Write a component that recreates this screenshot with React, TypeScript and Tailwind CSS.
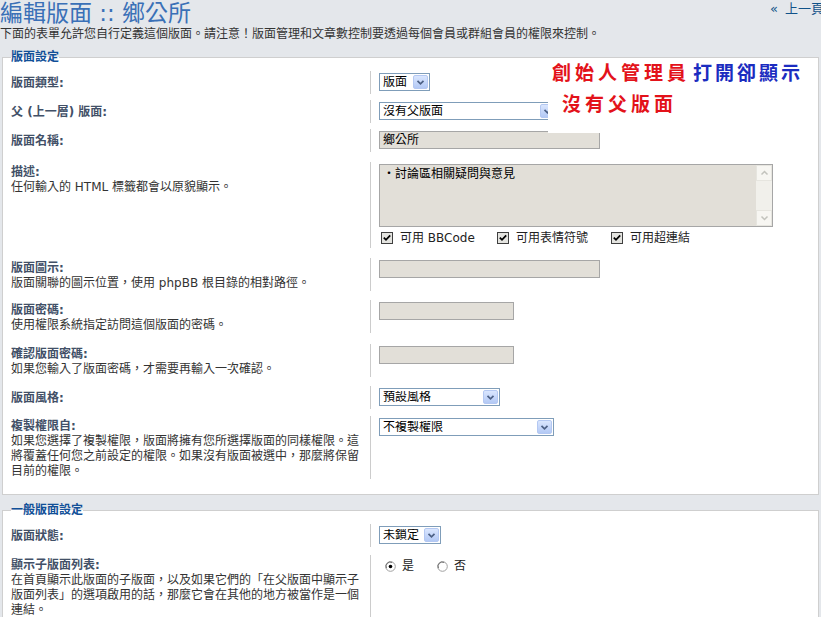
import React from "react";

/* --- small form controls (XP-era look) ------------------------------ */
function Arrow() {
  return (
    <span className="mr-px flex h-[14px] w-[15px] shrink-0 items-center justify-center rounded-[2px] border border-[#b4c8f2] bg-linear-to-b from-[#dae6fe] to-[#b3c9f5]">
      <svg width="9" height="7" viewBox="0 0 9 7">
        <path d="M1.5 1.8 L4.5 4.8 L7.5 1.8" fill="none" stroke="#4d6185" strokeWidth="1.7" />
      </svg>
    </span>
  );
}

function Select({ value, w }: { value: string; w: string }) {
  return (
    <div className={`${w} flex h-[18px] items-center border border-[#7f9db9] bg-white`}>
      <span className="flex-1 overflow-hidden whitespace-nowrap pl-[3px] text-[12px] leading-none text-black">{value}</span>
      <Arrow />
    </div>
  );
}

function Input({ value = "", w }: { value?: string; w: string }) {
  return (
    <div className={`${w} flex h-[18px] items-center border border-[#a6a6a6] bg-[#e2dfd8] pl-[3px] text-[12px] leading-none text-black`}>
      {value}
    </div>
  );
}

function Check({ label }: { label: string }) {
  return (
    <div className="flex items-center">
      <svg width="12" height="12" viewBox="0 0 12 12" className="shrink-0">
        <rect x="0.5" y="0.5" width="11" height="11" fill="#e4e4e0" stroke="#3f3f3f" />
        <path d="M2.8 5.6 L5 7.8 L9.2 3.4" fill="none" stroke="#000" strokeWidth="1.8" />
      </svg>
      <span className="ml-[7px] text-[12px] leading-[14px] text-[#222]">{label}</span>
    </div>
  );
}

function Radio({ label, on }: { label: string; on?: boolean }) {
  return (
    <div className="flex items-center">
      <svg width="11" height="11" viewBox="0 0 11 11" className="shrink-0">
        <circle cx="5.5" cy="5.5" r="4.8" fill="#fff" stroke="#a0a0a0" />
        <path d="M1.4 7.2 A4.4 4.4 0 0 1 7.2 1.4" fill="none" stroke="#6b6b6b" strokeWidth="1" />
        {on && <circle cx="5.5" cy="5.5" r="1.8" fill="#000" />}
      </svg>
      <span className="ml-[6px] text-[12px] leading-[14px] text-[#222]">{label}</span>
    </div>
  );
}

/* --- a dl-style form row -------------------------------------------- */
function Row({
  className = "",
  label,
  desc,
  children,
}: {
  className?: string;
  label: string;
  desc?: React.ReactNode;
  children: React.ReactNode;
}) {
  return (
    <div className={`flex ${className}`}>
      <div className="w-[359px] shrink-0 pt-[3px]">
        <div className={`text-[12px] font-bold text-[#425067] ${desc ? "leading-[15px]" : "leading-[18px]"}`}>{label}</div>
        {desc && <div className="text-[12px] leading-[15px] text-[#333]">{desc}</div>}
      </div>
      <div className="flex-1 border-l border-[#cccccc] pb-[3px] pl-[8px] pt-[2px]">{children}</div>
    </div>
  );
}

function Legend({ children }: { children: React.ReactNode }) {
  return <legend className="text-[12px] font-bold leading-[14px] text-[#115098]">{children}</legend>;
}

export default function App() {
  return (
    <div className="relative min-h-screen overflow-hidden bg-[#e4e7eb] pb-10 font-['DejaVu_Sans','Noto_Sans_CJK_TC',sans-serif]">
      {/* header */}
      <div className="flex h-[25px] items-start justify-between pt-[2px]">
        <h1 className="text-[23px] font-normal leading-[23px] text-[#3a70b7]">編輯版面 :: 鄉公所</h1>
        <a className="-mr-[3px] text-[13px] leading-[14px] text-[#105289]">
          «<span className="ml-[7px]">上一頁</span>
        </a>
      </div>
      <p className="mt-[2px] text-[12px] leading-[15px] text-[#333]">
        下面的表單允許您自行定義這個版面。請注意！版面管理和文章數控制要透過每個會員或群組會員的權限來控制。
      </p>

      {/* 版面設定 */}
      <fieldset className="mx-[2px] mt-[8px] border border-[#cfcfcf] bg-white pb-[15px] pl-[8px] pt-[7px]">
        <Legend>版面設定</Legend>

        <Row label="版面類型:">
          <Select value="版面" w="w-[51px]" />
        </Row>
        <Row className="mt-[6px]" label="父 (上一層) 版面:">
          <Select value="沒有父版面" w="w-[178px]" />
        </Row>
        <Row className="mt-[6px]" label="版面名稱:">
          <Input value="鄉公所" w="w-[221px]" />
        </Row>
        <Row className="mt-[10px]" label="描述:" desc="任何輸入的 HTML 標籤都會以原貌顯示。">
          <div className="flex h-[63px] w-[394px] border border-[#a6a6a6] bg-[#e2dfd8]">
            <div className="flex-1 pl-[3px] pt-[2px] text-[12px] leading-[15px] text-black">・討論區相關疑問與意見</div>
            <div className="flex w-[16px] flex-col bg-[#f1f0eb]">
              <div className="flex h-[16px] items-center justify-center border border-[#e6e5df] bg-[#f7f6f2]">
                <svg width="9" height="6" viewBox="0 0 9 6">
                  <path d="M1.5 4.5 L4.5 1.5 L7.5 4.5" fill="none" stroke="#c3c3bd" strokeWidth="1.5" />
                </svg>
              </div>
              <div className="flex-1" />
              <div className="flex h-[16px] items-center justify-center border border-[#e6e5df] bg-[#f7f6f2]">
                <svg width="9" height="6" viewBox="0 0 9 6">
                  <path d="M1.5 1.5 L4.5 4.5 L7.5 1.5" fill="none" stroke="#c3c3bd" strokeWidth="1.5" />
                </svg>
              </div>
            </div>
          </div>
          <div className="ml-[2px] mt-[4px] flex">
            <div className="w-[116px]">
              <Check label="可用 BBCode" />
            </div>
            <div className="w-[114px]">
              <Check label="可用表情符號" />
            </div>
            <Check label="可用超連結" />
          </div>
        </Row>
        <Row className="mt-[10px]" label="版面圖示:" desc="版面關聯的圖示位置，使用 phpBB 根目錄的相對路徑。">
          <Input w="w-[221px]" />
        </Row>
        <Row className="mt-[9px]" label="版面密碼:" desc="使用權限系統指定訪問這個版面的密碼。">
          <Input w="w-[135px]" />
        </Row>
        <Row className="mt-[11px]" label="確認版面密碼:" desc="如果您輸入了版面密碼，才需要再輸入一次確認。">
          <Input w="w-[135px]" />
        </Row>
        <Row className="mt-[9px]" label="版面風格:">
          <Select value="預設風格" w="w-[121px]" />
        </Row>
        <Row
          className="mt-[7px]"
          label="複製權限自:"
          desc={
            <>
              如果您選擇了複製權限，版面將擁有您所選擇版面的同樣權限。這
              <br />
              將覆蓋任何您之前設定的權限。如果沒有版面被選中，那麼將保留
              <br />
              目前的權限。
            </>
          }
        >
          <Select value="不複製權限" w="w-[175px]" />
        </Row>
      </fieldset>

      {/* 一般版面設定 */}
      <fieldset className="mx-[2px] mt-[8px] border border-[#cfcfcf] bg-white pb-[15px] pl-[8px] pt-[7px]">
        <Legend>一般版面設定</Legend>

        <Row label="版面狀態:">
          <Select value="未鎖定" w="w-[62px]" />
        </Row>
        <Row
          className="mt-[8px]"
          label="顯示子版面列表:"
          desc={
            <>
              在首頁顯示此版面的子版面，以及如果它們的「在父版面中顯示子
              <br />
              版面列表」的選項啟用的話，那麼它會在其他的地方被當作是一個
              <br />
              連結。
            </>
          }
        >
          <div className="ml-[6px] mt-[2px] flex">
            <div className="w-[52px]">
              <Radio label="是" on />
            </div>
            <Radio label="否" />
          </div>
        </Row>
      </fieldset>

      {/* pasted annotation lying over the form */}
      <div className="absolute left-[548px] top-[58px] h-[75px] w-[268px] bg-white">
        <div className="ml-[4px] mt-[6px] whitespace-nowrap text-[19px] font-bold leading-[19px] tracking-[4px]">
          <span className="text-[#e3121a]">創始人管理員</span>
          <span className="ml-[3px] tracking-[3px] text-[#1b2cc0]">打開卻顯示</span>
        </div>
        <div className="ml-[14px] mt-[12px] whitespace-nowrap text-[19px] font-bold leading-[19px] tracking-[4px] text-[#e3121a]">
          沒有父版面
        </div>
      </div>
    </div>
  );
}
